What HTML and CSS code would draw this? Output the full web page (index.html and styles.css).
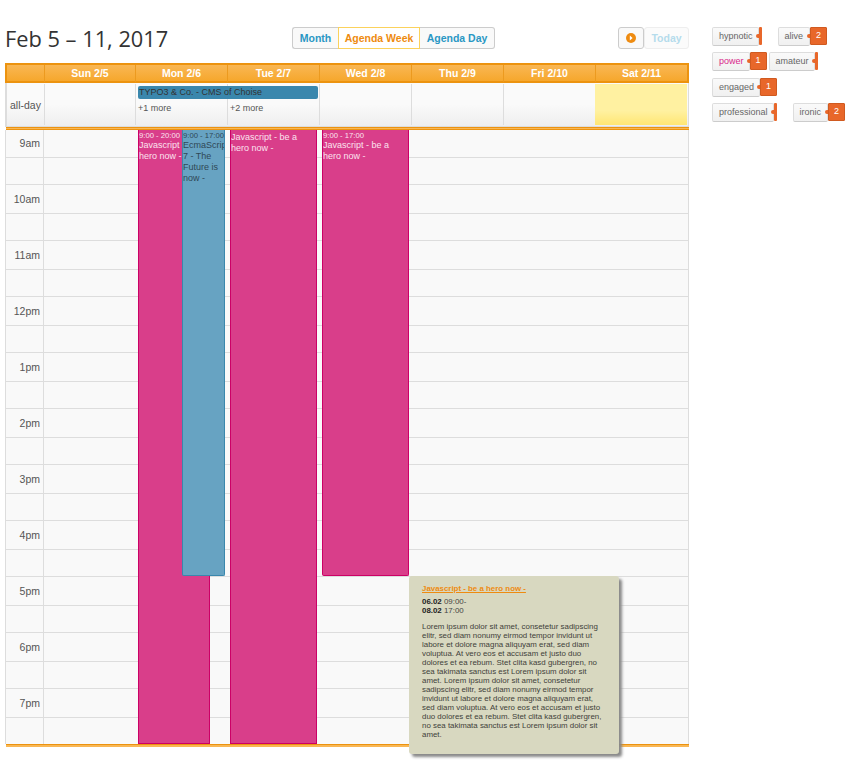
FILE: index.html
```html
<!DOCTYPE html>
<html lang="en">
<head>
<meta charset="utf-8">
<title>Calendar</title>
<link rel="stylesheet" href="styles.css">
</head>
<body>
<div class="page">
  <main class="main">
    <div class="toolbar">
      <h1 class="title">Feb 5 – 11, 2017</h1>
      <div class="views">
        <button class="btn first-btn">Month</button><button class="btn active">Agenda Week</button><button class="btn last-btn">Agenda Day</button>
      </div>
      <div class="nav">
        <button class="btn arrow"><svg width="10" height="10" viewBox="0 0 10 10"><circle cx="5" cy="5" r="5" fill="#ee8b10"/><path d="M3.8 2.6 6.6 5 3.8 7.4Z" fill="#fff"/></svg></button>
        <button class="btn today">Today</button>
      </div>
    </div>
    <div class="calendar">
      <div class="head">
        <div class="hcell"></div><div class="hcell">Sun 2/5</div><div class="hcell">Mon 2/6</div><div class="hcell">Tue 2/7</div><div class="hcell">Wed 2/8</div><div class="hcell">Thu 2/9</div><div class="hcell">Fri 2/10</div><div class="hcell">Sat 2/11</div>
      </div>
      <div class="allday">
        <div class="acell axis-cell">all-day</div>
        <div class="acell"></div>
        <div class="acell"><span class="more">+1 more</span></div>
        <div class="acell"><span class="more">+2 more</span></div>
        <div class="acell"></div>
        <div class="acell"></div>
        <div class="acell"></div>
        <div class="acell sat"></div>
        <div class="allday-event">TYPO3 &amp; Co. - CMS of Choise</div>
      </div>
      <div class="divider"></div>
      <div class="times">
        <div class="row top"><span class="axis">9am</span><span class="slot"></span></div>
        <div class="row half"><span class="axis"></span><span class="slot"></span></div>
        <div class="row hour"><span class="axis">10am</span><span class="slot"></span></div>
        <div class="row half"><span class="axis"></span><span class="slot"></span></div>
        <div class="row hour"><span class="axis">11am</span><span class="slot"></span></div>
        <div class="row half"><span class="axis"></span><span class="slot"></span></div>
        <div class="row hour"><span class="axis">12pm</span><span class="slot"></span></div>
        <div class="row half"><span class="axis"></span><span class="slot"></span></div>
        <div class="row hour"><span class="axis">1pm</span><span class="slot"></span></div>
        <div class="row half"><span class="axis"></span><span class="slot"></span></div>
        <div class="row hour"><span class="axis">2pm</span><span class="slot"></span></div>
        <div class="row half"><span class="axis"></span><span class="slot"></span></div>
        <div class="row hour"><span class="axis">3pm</span><span class="slot"></span></div>
        <div class="row half"><span class="axis"></span><span class="slot"></span></div>
        <div class="row hour"><span class="axis">4pm</span><span class="slot"></span></div>
        <div class="row half"><span class="axis"></span><span class="slot"></span></div>
        <div class="row hour"><span class="axis">5pm</span><span class="slot"></span></div>
        <div class="row half"><span class="axis"></span><span class="slot"></span></div>
        <div class="row hour"><span class="axis">6pm</span><span class="slot"></span></div>
        <div class="row half"><span class="axis"></span><span class="slot"></span></div>
        <div class="row hour"><span class="axis">7pm</span><span class="slot"></span></div>
        <div class="row half last"><span class="axis"></span><span class="slot"></span></div>
        <div class="event pink mon-a"><div class="etime">9:00 - 20:00</div><div class="etitle">Javascript - be a hero now -</div></div>
        <div class="event blue mon-b"><div class="etime">9:00 - 17:00</div><div class="etitle">EcmaScript 7 - The Future is now -</div></div>
        <div class="event pink tue"><div class="etitle">Javascript - be a hero now -</div></div>
        <div class="event pink wed"><div class="etime">9:00 - 17:00</div><div class="etitle">Javascript - be a hero now -</div></div>
      </div>
      <div class="foot"></div>
      <div class="popup">
        <a class="ptitle">Javascript - be a hero now -</a>
        <p class="pdate"><b>06.02</b> 09:00-<br><b>08.02</b> 17:00</p>
        <p class="ptext">Lorem ipsum dolor sit amet, consetetur sadipscing elitr, sed diam nonumy eirmod tempor invidunt ut labore et dolore magna aliquyam erat, sed diam voluptua. At vero eos et accusam et justo duo dolores et ea rebum. Stet clita kasd gubergren, no sea takimata sanctus est Lorem ipsum dolor sit amet. Lorem ipsum dolor sit amet, consetetur sadipscing elitr, sed diam nonumy eirmod tempor invidunt ut labore et dolore magna aliquyam erat, sed diam voluptua. At vero eos et accusam et justo duo dolores et ea rebum. Stet clita kasd gubergren, no sea takimata sanctus est Lorem ipsum dolor sit amet.</p>
      </div>
    </div>
  </main>
  <aside class="tags">
    <div class="tagrow wide">
      <div class="tag"><span class="label">hypnotic</span><span class="count empty"></span></div>
      <div class="tag"><span class="label roomy">alive</span><span class="count">2</span></div>
    </div>
    <div class="tagrow narrow">
      <div class="tag"><span class="label hot">power</span><span class="count">1</span></div>
      <div class="tag"><span class="label">amateur</span><span class="count empty"></span></div>
    </div>
    <div class="tagrow">
      <div class="tag"><span class="label">engaged</span><span class="count">1</span></div>
    </div>
    <div class="tagrow wide">
      <div class="tag"><span class="label">professional</span><span class="count empty"></span></div>
      <div class="tag"><span class="label roomy">ironic</span><span class="count">2</span></div>
    </div>
  </aside>
</div>
</body>
</html>
```
FILE: styles.css
```css
* { box-sizing: border-box; }
html, body { margin: 0; padding: 0; background: #fff; }
body { font-family: "Liberation Sans", Arial, sans-serif; color: #444; }
.page { display: flex; align-items: flex-start; padding: 27px 0 0 5px; height: 769px; overflow: hidden; }
.main { width: 684px; flex: none; }

.toolbar { display: flex; align-items: center; height: 22px; margin-bottom: 14px; }
.title { margin: 2px 0 0; width: 287px; font: 400 21.8px/24px "Open Sans", sans-serif; color: #333; white-space: nowrap; }
.views { display: flex; }
.nav { display: flex; margin-left: auto; }
.btn { height: 22px; padding: 0; margin: 0; border: 1px solid #ccc; background: #f9f9f9; font: 700 10.5px/20px "Liberation Sans", Arial, sans-serif; color: #2a97c4; }
.first-btn { width: 46px; border-radius: 3px 0 0 3px; border-right: 0; }
.active { width: 82px; border-color: #fbd25c; background: #fff; color: #ee8b10; }
.last-btn { width: 75px; border-radius: 0 3px 3px 0; border-left: 0; }
.arrow { width: 26px; display: flex; align-items: center; justify-content: center; border-radius: 3px; }
.today { width: 45px; border-color: #eee; border-radius: 3px; color: #b5dcec; background: #fbfbfb; }

.calendar { position: relative; width: 684px; }
.head { display: grid; grid-template-columns: 38px 91px repeat(5, 92px) 91px; height: 20px; border: 2px solid #ec930f; background: linear-gradient(#f9b754, #f6a72c); }
.hcell { border-right: 1px solid #ec9a1f; font: 700 10.5px/17px "Liberation Sans", Arial, sans-serif; color: #fff; text-align: center; }
.hcell:last-child { border-right: 0; }

.allday { position: relative; display: grid; grid-template-columns: 38px 91px repeat(5, 92px) 91px; height: 44px; border-left: 2px solid #ddd; border-right: 1px solid #ddd; padding-top: 1px; background: linear-gradient(#fafafa 50%, #eeeeee); border-bottom: 1px solid #ddd; }
.acell { border-right: 1px solid #ddd; padding: 0 0 0 2px; font-size: 9px; color: #555; height: 41px; }
.axis-cell { font-size: 10.5px; line-height: 42px; padding: 0 0 0 3px; color: #555; }
.more { display: block; padding-top: 18px; line-height: 12px; }
.sat { background: linear-gradient(#fff1a1 65%, #ffe674); border-right: 0; width: 92px; margin-left: -1px; }
.allday-event { position: absolute; left: 131px; top: 3px; width: 180px; height: 13px; border-radius: 2px; background: #3a87ad; padding-left: 1px; font-size: 9px; line-height: 12px; color: #333; }

.divider { height: 3px; background: #f9b754; border-top: 1px solid #ec930f; border-bottom: 1px solid #ec930f; margin: 0 0 0 1px; }

.times { position: relative; border-left: 1px solid #ddd; border-right: 1px solid #ddd; background: #f9f9f9; overflow: hidden; }
.row { display: flex; border-bottom: 1px solid #ddd; }
.hour { height: 29px; }
.half { height: 27px; }
.top { height: 28px; }
.last { height: 26px; border-bottom: 0; }
.axis { width: 38px; flex: none; border-right: 1px solid #ddd; padding-right: 3px; font-size: 10.5px; line-height: 27px; text-align: right; color: #555; }
.hour .axis { line-height: 29px; }
.slot { flex: 1; }

.event { position: absolute; top: 0; padding: 0; font-size: 9px; line-height: 11px; overflow: hidden; border: 1px solid; border-top: 0; }
.pink { background: #d93e8a; border-color: #cc0066; color: #fbe3ef; }
.blue { background: #67a3c2; border-color: #3a87ad; color: #2f4856; z-index: 2; border-radius: 0 0 2px 2px; }
.etime { font-size: 7.7px; line-height: 12px; height: 10px; white-space: nowrap; }
.mon-a { left: 132px; width: 72px; height: 614px; }
.mon-b { left: 176px; width: 43px; height: 446px; }
.tue { left: 224px; width: 87px; height: 614px; padding-top: 1.5px; }
.wed { left: 316px; width: 87px; height: 446px; border-radius: 0 0 2px 2px; }

.foot { height: 3px; background: #f9b754; border-top: 1px solid #ec930f; margin-left: 1px; }

.popup { position: absolute; left: 404px; top: 513px; width: 210px; height: 178px; padding: 8px 15px 8px 13px; background: #d8d8c0; border-radius: 3px; box-shadow: 3px 3px 3px #888; font-size: 7.9px; line-height: 9px; color: #3f3f3a; z-index: 5; }
.ptitle { display: block; width: fit-content; font-weight: 700; color: #ee8b10; text-decoration: underline; line-height: 9px; margin-bottom: 4px; }
.pdate { margin: 0 0 7px; color: #444; }
.pdate b { color: #222; }
.ptext { margin: 0; }

.tags { margin-left: 23px; flex: none; width: 146px; }
.tagrow { display: flex; height: 19px; margin-bottom: 6.4px; }
.wide { gap: 16px; }
.narrow { gap: 2px; }
.tag { display: flex; height: 19px; }
.label { display: block; height: 19px; padding: 0 5px 0 6px; border: 1px solid #ddd; border-bottom-color: #ccc; border-radius: 2px; background: linear-gradient(#fafafa, #f0f0f0); font-size: 9px; line-height: 16px; color: #666; }
.roomy { padding-right: 6px; }
.hot { color: #d9268a; }
.count { position: relative; display: block; width: 17px; height: 18px; background: #e8672a; border: 1px solid #d05a20; border-radius: 1px; font-size: 9px; line-height: 14px; text-align: center; color: #fff; }
.count::before { content: ""; position: absolute; left: -4px; top: 6px; width: 3px; height: 4px; background: #e8672a; border-radius: 2px 0 0 2px; }
.count.empty { width: 3px; border: 0; }
.count.empty::before { left: -3px; top: 7px; }
```
